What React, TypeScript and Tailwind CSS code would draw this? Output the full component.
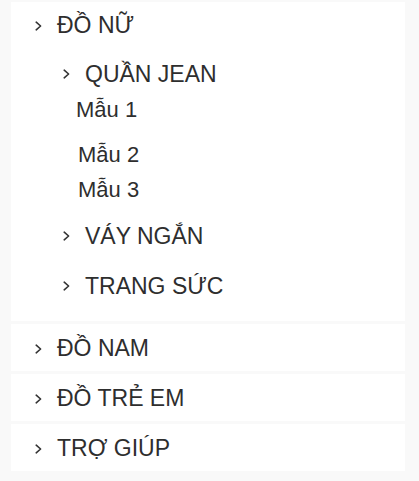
import React from 'react';

// Mũi tên nhỏ trước mỗi mục menu
const Chevron = () => (
  <svg width="7" height="10" viewBox="0 0 7 10" fill="none" className="shrink-0">
    <path d="M1.2 1.2L5.6 5L1.2 8.8" stroke="#333" strokeWidth="1.6" strokeLinecap="round" strokeLinejoin="round" />
  </svg>
);

interface RowProps {
  label: string;
  className?: string;
  arrow?: boolean;
}

const Row = ({ label, className = '', arrow = true }: RowProps) => (
  <div className={`flex items-center ${className}`}>
    {arrow && <Chevron />}
    <span className={arrow ? 'ml-[15px]' : ''}>{label}</span>
  </div>
);

const App = () => {
  const others = ['ĐỒ NAM', 'ĐỒ TRẺ EM', 'TRỢ GIÚP'];

  return (
    <div
      className="min-h-[481px] bg-[#f9f9f9] pl-[11px] pt-[2px] text-[23px] text-[#2e2e2e]"
      style={{ fontFamily: '"Liberation Sans", Arial, sans-serif' }}
    >
      <div className="flex w-[394px] flex-col gap-[3px]">
        {/* Danh mục đang mở */}
        <div className="h-[319px] bg-white pl-[24px]">
          <Row label="ĐỒ NỮ" className="h-[46px] pt-[1px]" />
          <div className="pl-[28px]">
            <Row label="QUẦN JEAN" className="mt-[8px] h-[36px]" />
            <Row label="Mẫu 1" arrow={false} className="mt-[2px] h-[30px] pl-[13px] text-[22px]" />
            <Row label="Mẫu 2" arrow={false} className="mt-[15px] h-[30px] pl-[15px] text-[22px]" />
            <Row label="Mẫu 3" arrow={false} className="mt-[5px] h-[30px] pl-[15px] text-[22px]" />
            <Row label="VÁY NGẮN" className="mt-[14px] h-[36px]" />
            <Row label="TRANG SỨC" className="mt-[14px] h-[36px]" />
          </div>
        </div>

        {others.map((name) => (
          <div key={name} className="h-[47px] bg-white pl-[24px]">
            <Row label={name} className="h-full pt-[2px]" />
          </div>
        ))}
      </div>
    </div>
  );
};

export default App;
